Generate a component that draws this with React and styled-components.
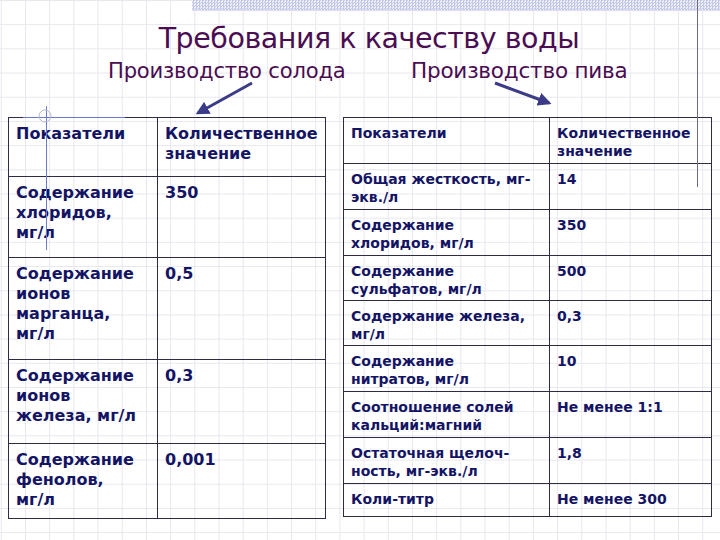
import React from 'react';
import styled, { createGlobalStyle } from 'styled-components';

const GlobalStyle = createGlobalStyle`
  html, body {
    margin: 0;
    padding: 0;
    background: #ffffff;
  }
`;

const Slide = styled.div`
  position: relative;
  width: 720px;
  height: 540px;
  overflow: hidden;
  background-color: #ffffff;
  background-image:
    linear-gradient(to right, #e7e7ee 1px, transparent 1px),
    linear-gradient(to bottom, #e7e7ee 1px, transparent 1px);
  background-size: 24.2px 24.2px;
  background-position: 0.8px 0;
  font-family: "DejaVu Sans", Verdana, sans-serif;
`;

const TopBand = styled.div`
  margin-left: 192px;
  height: 10px;
  background:
    repeating-conic-gradient(#c3c8e6 0 25%, #eceefa 0 50%) 0 0 / 3px 3px;
  border-bottom: 1px solid #dcdcf2;
`;

const Title = styled.h1`
  margin: 11px 0 0;
  text-align: center;
  font-weight: normal;
  font-size: 28.5px;
  line-height: 34px;
  letter-spacing: -0.45px;
  color: #4a0c52;
  padding-left: 18px;
`;

const SubRow = styled.div`
  display: grid;
  grid-template-columns: 303px auto;
  padding-left: 108px;
  margin-top: 1px;
`;

const Sub = styled.div`
  font-size: ${p => p.$size}px;
  line-height: 28px;
  letter-spacing: -0.2px;
  color: #4a0c52;
  white-space: nowrap;
`;

const Tables = styled.div`
  display: flex;
  align-items: flex-start;
  gap: 17px;
  padding-left: 8px;
  margin-top: 32px;
`;

const Table = styled.table`
  border-collapse: collapse;
  table-layout: fixed;
  width: ${p => p.$width}px;
  border: 1px solid #2c2c46;
  color: #141464;
  font-weight: bold;
  font-size: ${p => p.$size}px;
  line-height: ${p => p.$lh}px;
`;

const Row = styled.tr`
  height: ${p => p.$h}px;
`;

const Cell = styled.td`
  border: 1px solid #2c2c46;
  vertical-align: top;
  padding: 6px ${p => p.$px || 7}px 0;
  white-space: nowrap;
  width: ${p => (p.$w ? `${p.$w}px` : 'auto')};
`;

const Overlay = styled.svg`
  position: absolute;
  left: 0;
  top: 0;
  pointer-events: none;
`;

const malt = [
  { h: 59, name: ['Показатели'], value: ['Количественное', 'значение'] },
  { h: 81, name: ['Содержание', 'хлоридов,', 'мг/л'], value: ['350'] },
  { h: 102, name: ['Содержание', 'ионов', 'марганца,', 'мг/л'], value: ['0,5'] },
  { h: 84, name: ['Содержание', 'ионов', 'железа, мг/л'], value: ['0,3'] },
  { h: 75, name: ['Содержание', 'фенолов,', 'мг/л'], value: ['0,001'] },
];

const beer = [
  { h: 46, name: ['Показатели'], value: ['Количественное', 'значение'] },
  { h: 46, name: ['Общая жесткость, мг-', 'экв./л'], value: ['14'] },
  { h: 46, name: ['Содержание', 'хлоридов, мг/л'], value: ['350'] },
  { h: 45, name: ['Содержание', 'сульфатов, мг/л'], value: ['500'] },
  { h: 45, name: ['Содержание железа,', 'мг/л'], value: ['0,3'] },
  { h: 46, name: ['Содержание', 'нитратов, мг/л'], value: ['10'] },
  { h: 46, name: ['Соотношение солей', 'кальций:магний'], value: ['Не менее 1:1'] },
  { h: 46, name: ['Остаточная щелоч-', 'ность, мг-экв./л'], value: ['1,8'] },
  { h: 33, name: ['Коли-титр'], value: ['Не менее 300'] },
];

const Lines = ({ lines }) =>
  lines.map((l, i) => (
    <React.Fragment key={i}>
      {i > 0 && <br />}
      {l}
    </React.Fragment>
  ));

// first = outer width of the first column; cell width excludes side padding
const DataTable = ({ rows, width, first, size, lh, pad }) => (
  <Table $width={width} $size={size} $lh={lh}>
    <tbody>
      {rows.map((r, i) => (
        <Row key={i} $h={r.h}>
          <Cell $w={i === 0 ? first - pad * 2 : undefined} $px={pad}>
            <Lines lines={r.name} />
          </Cell>
          <Cell $px={pad}>
            <Lines lines={r.value} />
          </Cell>
        </Row>
      ))}
    </tbody>
  </Table>
);

export default function App() {
  return (
    <>
      <GlobalStyle />
      <Slide>
        <TopBand />
        <Title>Требования к качеству воды</Title>
        <SubRow>
          <Sub $size={21.1}>Производство солода</Sub>
          <Sub $size={21.5}>Производство пива</Sub>
        </SubRow>
        <Tables>
          <DataTable rows={malt} width={318} first={148} size={16} lh={20} pad={7} />
          <DataTable rows={beer} width={369} first={205} size={14} lh={18} pad={7} />
        </Tables>
        <Overlay width="720" height="540" viewBox="0 0 720 540">
          <defs>
            <marker id="head" viewBox="0 0 10 10" refX="8" refY="5" markerWidth="4.5" markerHeight="4.5" orient="auto">
              <path d="M0 0 L10 5 L0 10 z" fill="#3b3b88" />
            </marker>
          </defs>
          <line x1="252" y1="83" x2="198" y2="113" stroke="#3b3b88" strokeWidth="3" markerEnd="url(#head)" />
          <line x1="495" y1="83" x2="549" y2="103" stroke="#3b3b88" strokeWidth="3" markerEnd="url(#head)" />
          <line x1="697.5" y1="0" x2="697.5" y2="187" stroke="#6c6c84" strokeWidth="1" />
          <line x1="23" y1="117.5" x2="125" y2="117.5" stroke="#6a7ad0" strokeWidth="1" />
          <line x1="46.5" y1="106" x2="46.5" y2="250" stroke="#6a7ad0" strokeWidth="1" />
          <circle cx="45" cy="116" r="6" fill="none" stroke="#b4b6cc" strokeWidth="1" />
        </Overlay>
      </Slide>
    </>
  );
}
